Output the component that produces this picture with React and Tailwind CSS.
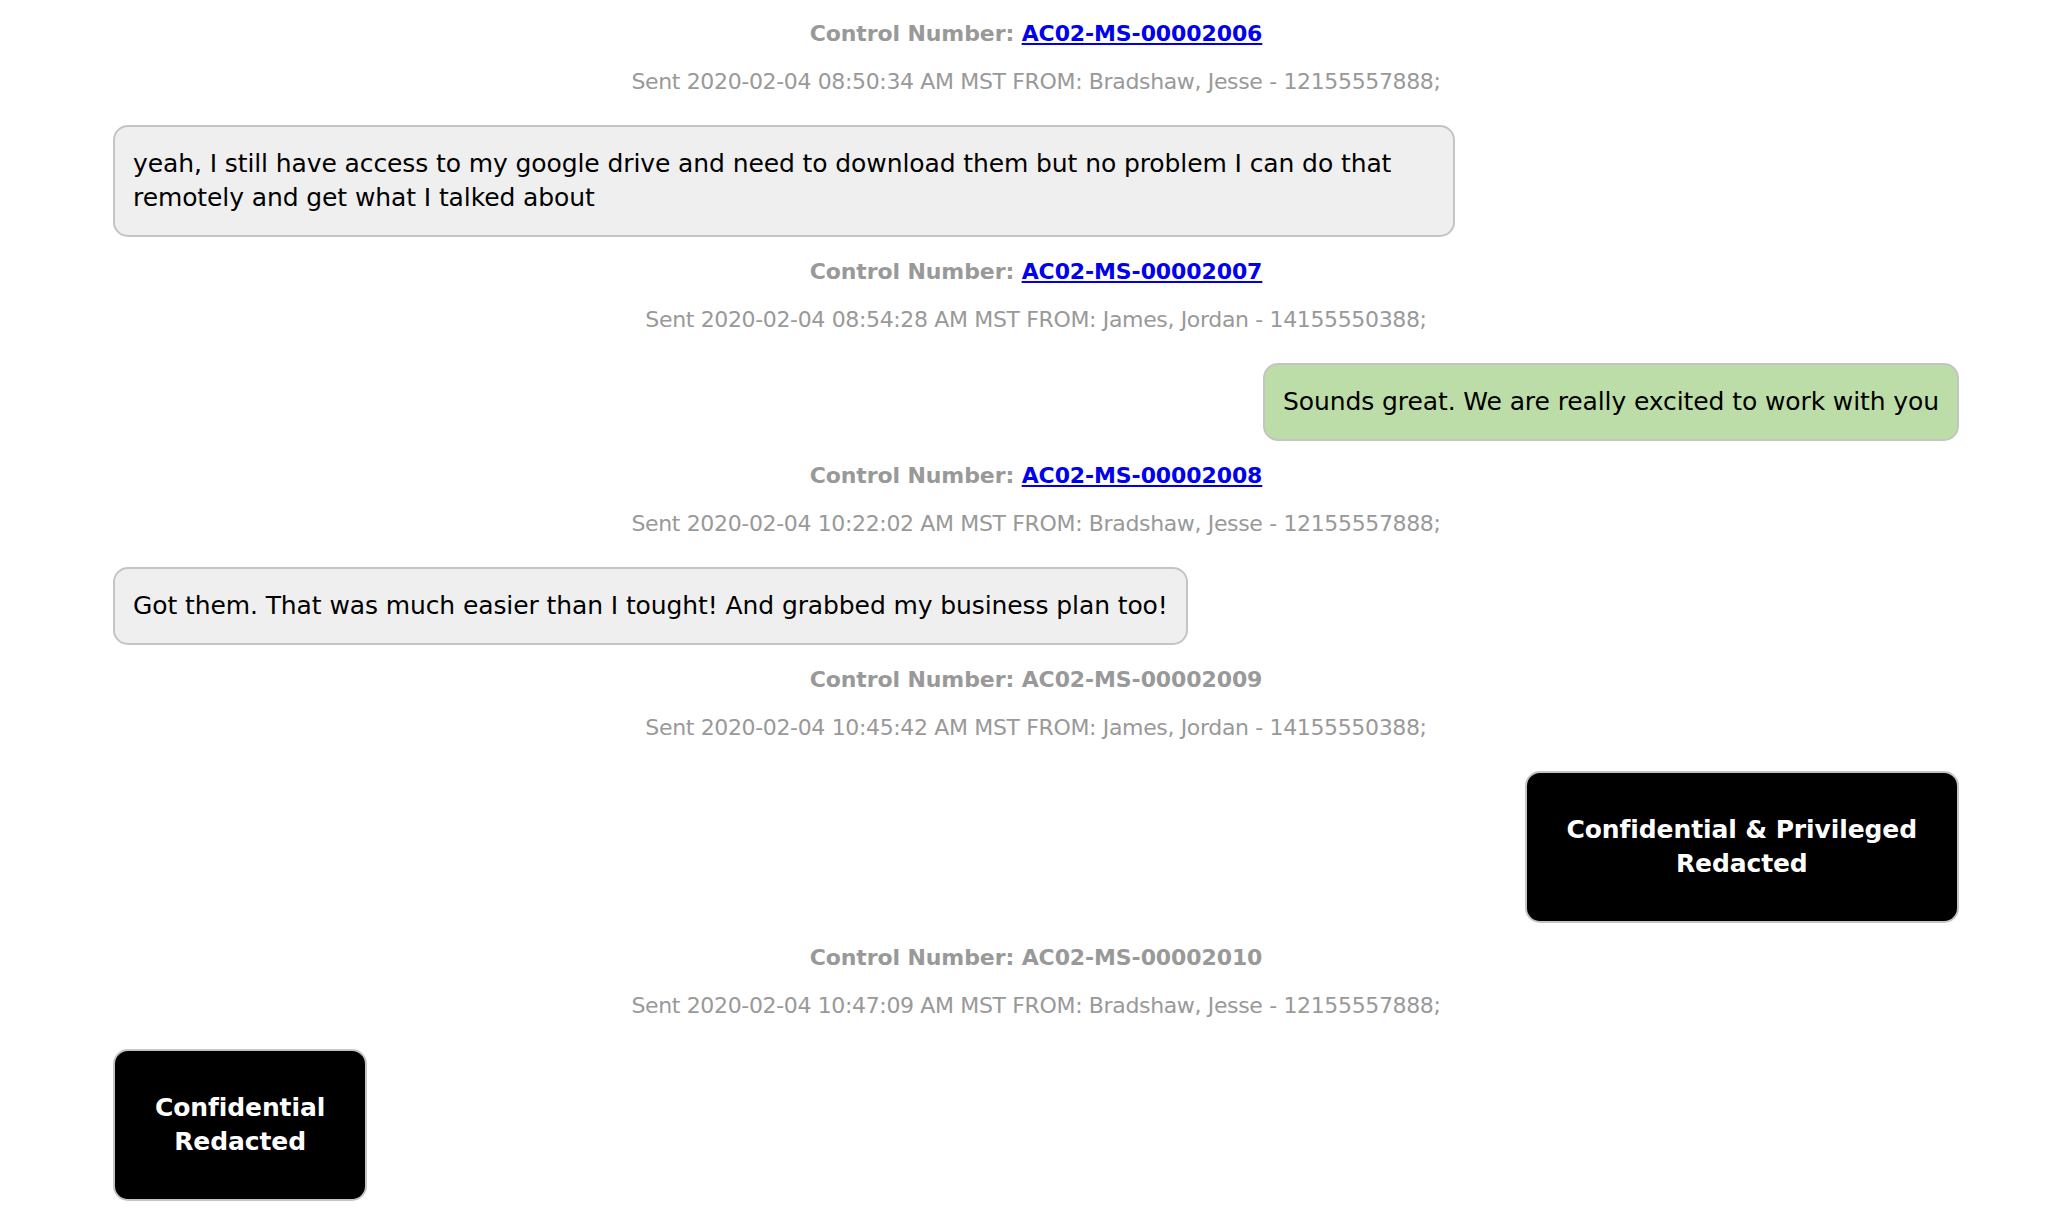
import React from "react";

const messages = [
  {
    cn: "AC02-MS-00002006",
    link: true,
    sent: "Sent 2020-02-04 08:50:34 AM MST FROM: Bradshaw, Jesse - 12155557888;",
    side: "left",
    kind: "gray",
    text: "yeah, I still have access to my google drive and need to download them but no problem I can do that remotely and get what I talked about",
  },
  {
    cn: "AC02-MS-00002007",
    link: true,
    sent: "Sent 2020-02-04 08:54:28 AM MST FROM: James, Jordan - 14155550388;",
    side: "right",
    kind: "green",
    text: "Sounds great. We are really excited to work with you",
  },
  {
    cn: "AC02-MS-00002008",
    link: true,
    sent: "Sent 2020-02-04 10:22:02 AM MST FROM: Bradshaw, Jesse - 12155557888;",
    side: "left",
    kind: "gray",
    text: "Got them. That was much easier than I tought! And grabbed my business plan too!",
  },
  {
    cn: "AC02-MS-00002009",
    link: false,
    sent: "Sent 2020-02-04 10:45:42 AM MST FROM: James, Jordan - 14155550388;",
    side: "right",
    kind: "black",
    lines: ["Confidential & Privileged", "Redacted"],
  },
  {
    cn: "AC02-MS-00002010",
    link: false,
    sent: "Sent 2020-02-04 10:47:09 AM MST FROM: Bradshaw, Jesse - 12155557888;",
    side: "left",
    kind: "black",
    lines: ["Confidential", "Redacted"],
  },
];

function Bubble({ m }) {
  if (m.kind === "black") {
    return (
      <div className="rounded-[15px] border-2 border-[#c4c4c4] bg-black px-[40px] py-[40px] text-center text-[25px] font-bold leading-[34px] tracking-[-0.1px] text-white">
        {m.lines.map((l, i) => (
          <div key={i}>{l}</div>
        ))}
      </div>
    );
  }
  const bg = m.kind === "green" ? "bg-[#bcdda7]" : "bg-[#efefef]";
  return (
    <div
      className={`max-w-[1342px] rounded-[15px] border-2 border-[#c4c4c4] ${bg} px-[18px] py-[20px] text-[25px] leading-[34px] tracking-[-0.1px] text-black`}
    >
      {m.text}
    </div>
  );
}

export default function App() {
  return (
    <div
      className="min-h-[1218px] w-full bg-white pl-[113px] pr-[111px] pt-[17px] pb-[19px]"
      style={{ fontFamily: '"DejaVu Sans", Verdana, sans-serif' }}
    >
      {messages.map((m, i) => (
        <div key={i} className={i === 0 ? "" : "mt-[18px]"}>
          <div className="text-center text-[22px] font-bold leading-[34px] tracking-[-0.1px] text-[#999999]">
            Control Number:{" "}
            {m.link ? (
              <a href="#" className="text-[#0000ee] underline">
                {m.cn}
              </a>
            ) : (
              <span>{m.cn}</span>
            )}
          </div>
          <div className="mt-[14px] text-center text-[22px] leading-[34px] tracking-[-0.35px] text-[#999999]">
            {m.sent}
          </div>
          <div
            className={`mt-[26px] flex ${
              m.side === "right" ? "justify-end" : "justify-start"
            }`}
          >
            <Bubble m={m} />
          </div>
        </div>
      ))}
    </div>
  );
}
